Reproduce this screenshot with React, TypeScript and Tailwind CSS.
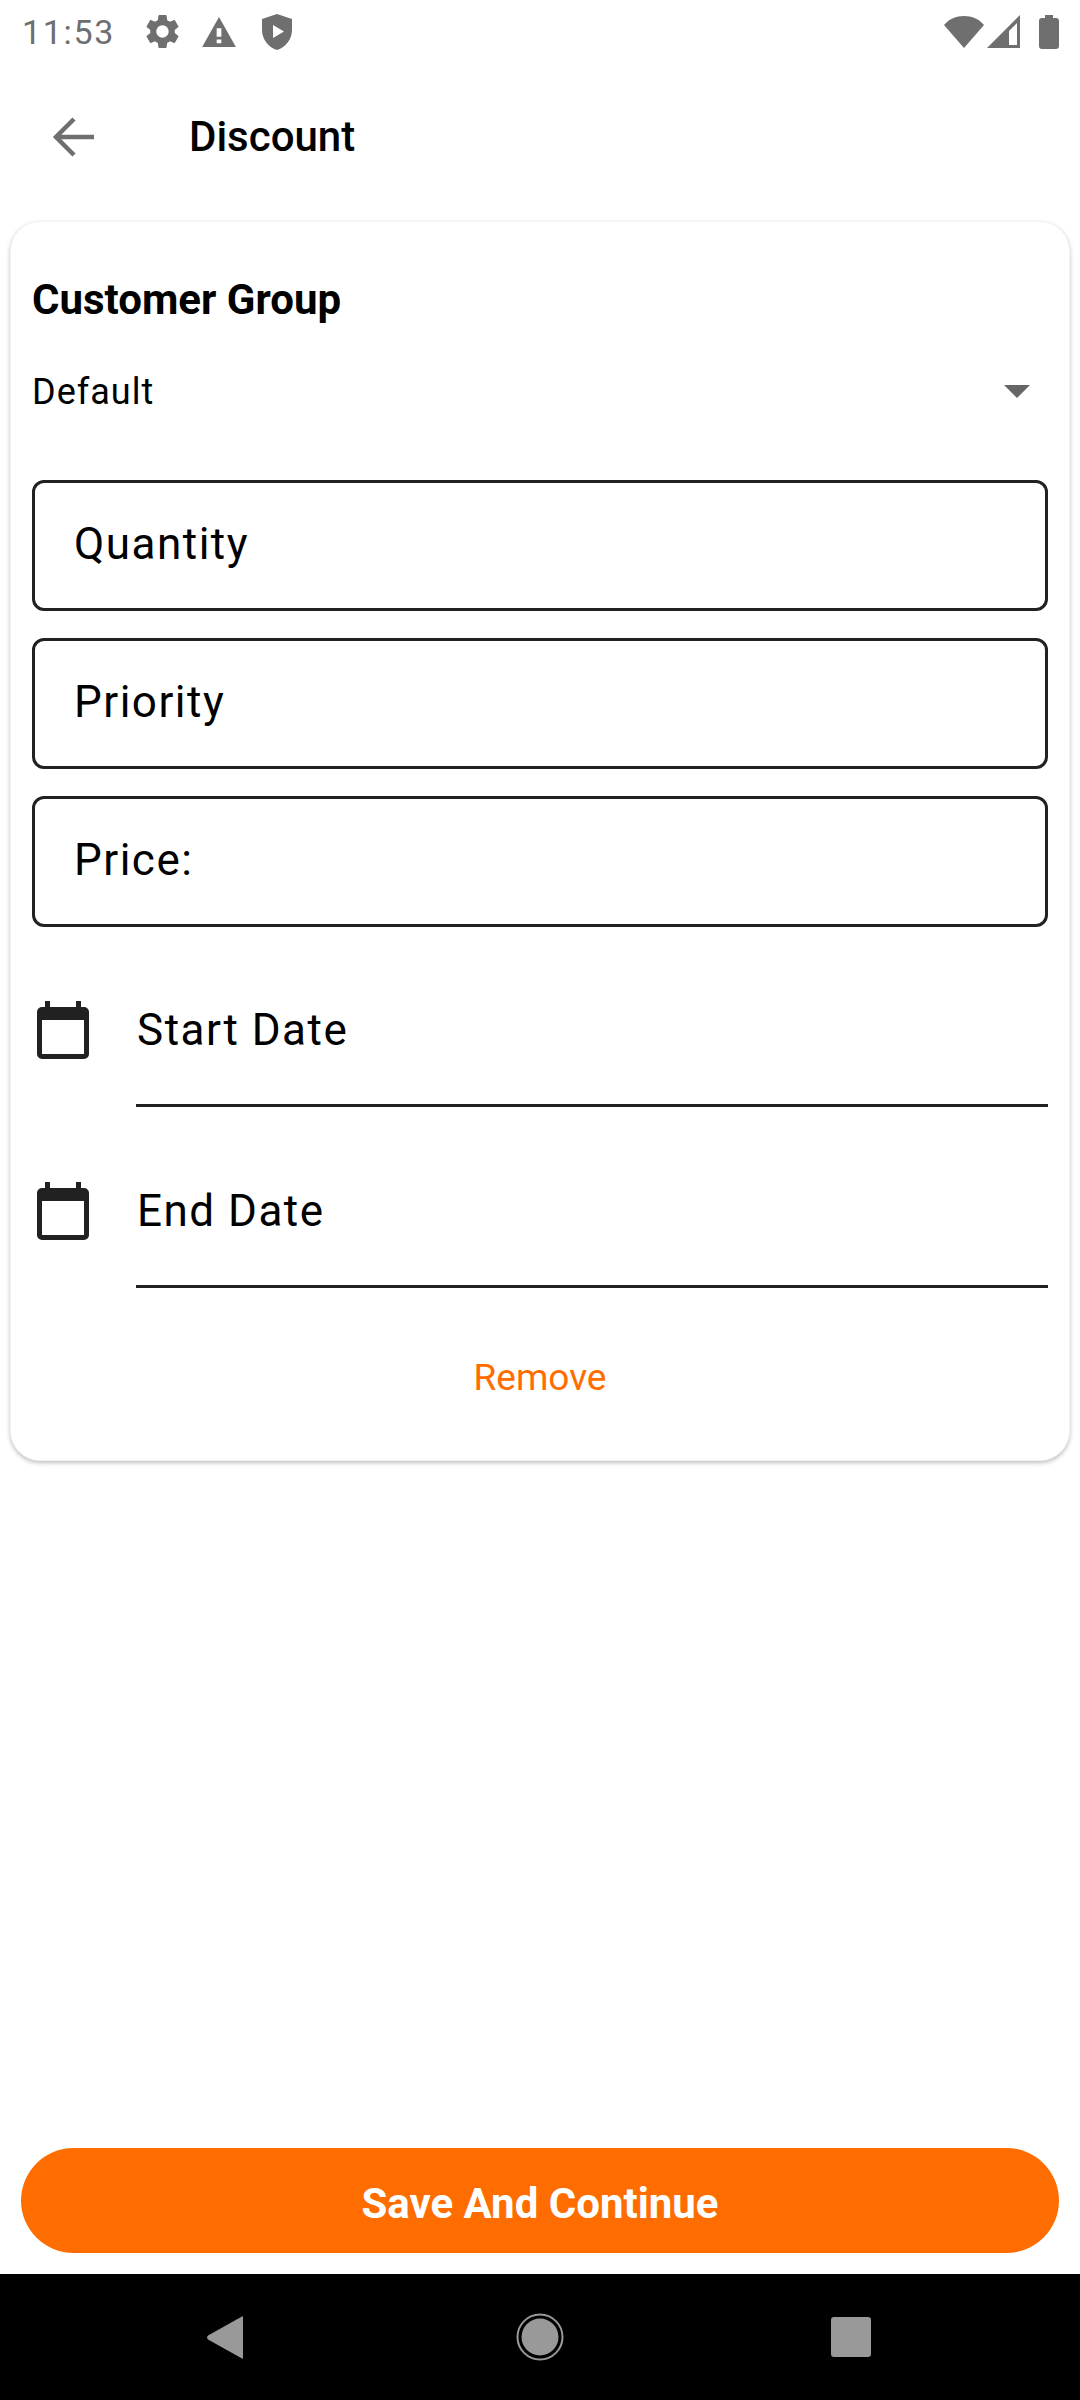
const Calendar = () => (
  <svg viewBox="0 0 52 58" className="w-[52px] h-[58px] shrink-0" fill="#212121">
    <path fillRule="evenodd" d="M8 0h5v6h26V0h5v6h3a5 5 0 0 1 5 5v42a5 5 0 0 1-5 5H5a5 5 0 0 1-5-5V11a5 5 0 0 1 5-5h3V0zM5 19v34h42V19H5z" />
  </svg>
);

const Field = ({ label }: { label: string }) => (
  <div className="h-[131px] border-[3px] border-[#212121] rounded-[12px] flex items-center pl-[39px] text-[44px] leading-[48px] tracking-[1.5px] text-black pb-[3px]">
    {label}
  </div>
);

const DateRow = ({ label }: { label: string }) => (
  <div className="flex h-[126px] items-start">
    <div className="w-[104px] pl-[5px] pt-[20px]">
      <Calendar />
    </div>
    <div className="flex-1 h-[126px] border-b-[3px] border-[#212121] text-[44px] leading-[48px] tracking-[1.5px] text-black pl-[1px] pt-[25px]">
      {label}
    </div>
  </div>
);

export default function App() {
  return (
    <div className="w-[1080px] h-[2400px] bg-white flex flex-col font-['Roboto',sans-serif] overflow-hidden">
      <div className="h-[66px] shrink-0 flex items-center pl-[22px] pr-[18px] pb-[3px] text-[#6f6f6f]">
        <span className="text-[34px] leading-[40px] tracking-[1.7px] w-[120px]">11:53</span>
        <svg viewBox="0 0 24 24" className="w-[41px] h-[41px]" fill="#6f6f6f">
          <path d="M19.14 12.94c.04-.3.06-.61.06-.94 0-.32-.02-.64-.07-.94l2.03-1.58a.49.49 0 0 0 .12-.61l-1.92-3.32a.488.488 0 0 0-.59-.22l-2.39.96c-.5-.38-1.03-.7-1.62-.94l-.36-2.54a.484.484 0 0 0-.48-.41h-3.84c-.24 0-.43.17-.47.41l-.36 2.54c-.59.24-1.13.57-1.62.94l-2.39-.96c-.22-.08-.47 0-.59.22L2.74 8.87c-.12.21-.08.47.12.61l2.03 1.58c-.05.3-.09.63-.09.94s.02.64.07.94l-2.03 1.58a.49.49 0 0 0-.12.61l1.92 3.32c.12.22.37.29.59.22l2.39-.96c.5.38 1.03.7 1.62.94l.36 2.54c.05.24.24.41.48.41h3.84c.24 0 .44-.17.47-.41l.36-2.54c.59-.24 1.13-.56 1.62-.94l2.39.96c.22.08.47 0 .59-.22l1.92-3.32c.12-.22.07-.47-.12-.61l-2.01-1.58zM12 15.6c-1.98 0-3.6-1.62-3.6-3.6s1.62-3.6 3.6-3.6 3.6 1.62 3.6 3.6-1.62 3.6-3.6 3.6z" />
        </svg>
        <svg viewBox="0 0 36 32" className="w-[34px] h-[30px] ml-[19px]" fill="#6f6f6f">
          <path fillRule="evenodd" d="M18 0l18 32H0L18 0zm-2.5 12v9h5v-9h-5zm0 12v4h5v-4h-5z" />
        </svg>
        <svg viewBox="0 0 30 36" className="w-[30px] h-[36px] ml-[26px]" fill="#6f6f6f">
          <path fillRule="evenodd" d="M15 0l15 5v11c0 9-6 17-15 20C6 33 0 25 0 16V5l15-5zm-4 11v13l11-6.5L11 11z" />
        </svg>
        <div className="flex-1" />
        <svg viewBox="0 0 40 32" className="w-[40px] h-[32px]" fill="#6f6f6f">
          <path d="M20 32L0 9C5 3 12 0 20 0s15 3 20 9L20 32z" />
        </svg>
        <svg viewBox="0 0 34 33" className="w-[34px] h-[33px] ml-[3px]" fill="#6f6f6f">
          <path fillRule="evenodd" d="M33 0v33H0L33 0zm-3 8l-8 8v14h8V8z" />
        </svg>
        <svg viewBox="0 0 20 34" className="w-[20px] h-[34px] ml-[18px] mr-[3px]" fill="#6f6f6f">
          <path d="M6 0h8v3h3a3 3 0 0 1 3 3v25a3 3 0 0 1-3 3H3a3 3 0 0 1-3-3V6a3 3 0 0 1 3-3h3V0z" />
        </svg>
      </div>

      <div className="h-[155px] shrink-0 flex items-start pt-[51px]">
        <svg viewBox="0 0 42 40" className="w-[42px] h-[40px] ml-[52px]" fill="none" stroke="#6f6f6f" strokeWidth="4.5">
          <path d="M42 20H4M22 2L4 20l18 18" />
        </svg>
        <span className="ml-[95px] -mt-[3px] text-[42px] leading-[46px] font-medium text-black">Discount</span>
      </div>

      <div className="mx-[10px] h-[1240px] shrink-0 rounded-[30px] bg-white border border-[#f3f3f3] shadow-[0_2px_4px_rgba(0,0,0,0.25)] px-[21px] flex flex-col">
        <div className="mt-[54px] text-[42px] leading-[48px] font-bold text-black">Customer Group</div>
        <div className="mt-[45px] h-[46px] flex items-center justify-between text-[36px] leading-[46px] tracking-[1px] text-black">
          <span>Default</span>
          <svg viewBox="0 0 26 13" className="w-[26px] h-[13px] mr-[18px] -mt-[2px]" fill="#666666">
            <path d="M0 0h26L13 13z" />
          </svg>
        </div>
        <div className="mt-[65px] flex flex-col gap-[27px]">
          <Field label="Quantity" />
          <Field label="Priority" />
          <Field label="Price:" />
        </div>
        <div className="mt-[54px] flex flex-col gap-[55px]">
          <DateRow label="Start Date" />
          <DateRow label="End Date" />
        </div>
        <div className="mt-[68px] text-center text-[37px] leading-[44px] text-[#ff6d00]">Remove</div>
      </div>

      <div className="flex-1" />

      <div className="mx-[21px] h-[105px] shrink-0 rounded-[53px] bg-[#ff6d00] flex items-center justify-center text-white text-[42px] leading-[48px] font-bold pt-[6px]">
        Save And Continue
      </div>

      <div className="h-[126px] mt-[21px] shrink-0 bg-black flex items-center justify-center">
        <svg viewBox="0 0 36 43" className="w-[38px] h-[43px] absolute left-[206px]" fill="#999999">
          <path d="M35 0.5c.6-.5 1-.2 1 .5v41c0 .7-.4 1-1 .5L1 23.5c-1.2-1-1.2-3 0-4L35 .5z" />
        </svg>
        <svg viewBox="0 0 48 48" className="w-[48px] h-[48px]">
          <circle cx="24" cy="24" r="22.5" fill="none" stroke="#999999" strokeWidth="2" />
          <circle cx="24" cy="24" r="18.5" fill="#999999" />
        </svg>
        <div className="absolute left-[831px] w-[40px] h-[40px] rounded-[3px] bg-[#999999]" />
      </div>
    </div>
  );
}
